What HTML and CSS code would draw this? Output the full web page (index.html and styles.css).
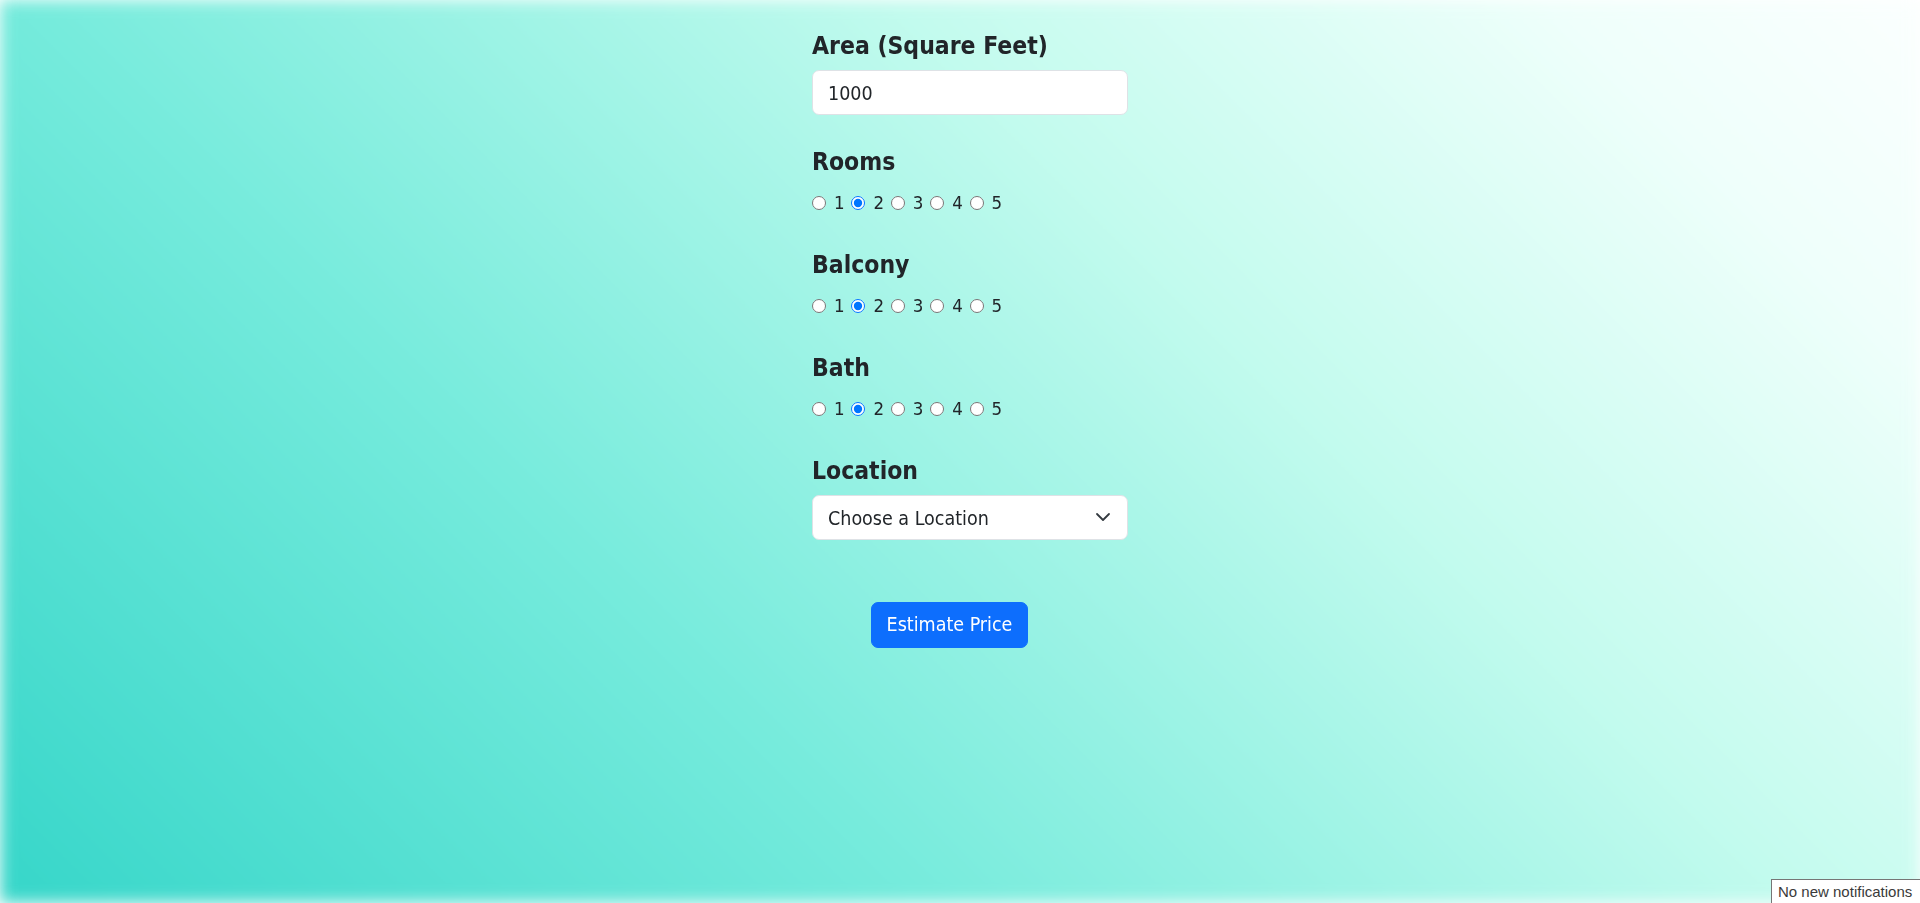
FILE: index.html
```html
<!DOCTYPE html>
<html lang="en">
<head>
<meta charset="utf-8">
<title>Price Estimator</title>
<link rel="stylesheet" href="styles.css">
</head>
<body>
<div class="bg"></div>
<main class="page">
  <form class="form">
    <div class="group">
      <label class="label" for="area">Area (Square Feet)</label>
      <input class="field" id="area" type="text" value="1000">
    </div>
    <div class="group">
      <div class="label">Rooms</div>
      <div class="radios">
        <label class="opt"><input type="radio" name="rooms"><span>1</span></label>
        <label class="opt"><input type="radio" name="rooms" checked><span>2</span></label>
        <label class="opt"><input type="radio" name="rooms"><span>3</span></label>
        <label class="opt"><input type="radio" name="rooms"><span>4</span></label>
        <label class="opt"><input type="radio" name="rooms"><span>5</span></label>
      </div>
    </div>
    <div class="group">
      <div class="label">Balcony</div>
      <div class="radios">
        <label class="opt"><input type="radio" name="balcony"><span>1</span></label>
        <label class="opt"><input type="radio" name="balcony" checked><span>2</span></label>
        <label class="opt"><input type="radio" name="balcony"><span>3</span></label>
        <label class="opt"><input type="radio" name="balcony"><span>4</span></label>
        <label class="opt"><input type="radio" name="balcony"><span>5</span></label>
      </div>
    </div>
    <div class="group">
      <div class="label">Bath</div>
      <div class="radios">
        <label class="opt"><input type="radio" name="bath"><span>1</span></label>
        <label class="opt"><input type="radio" name="bath" checked><span>2</span></label>
        <label class="opt"><input type="radio" name="bath"><span>3</span></label>
        <label class="opt"><input type="radio" name="bath"><span>4</span></label>
        <label class="opt"><input type="radio" name="bath"><span>5</span></label>
      </div>
    </div>
    <div class="group">
      <label class="label" for="loc">Location</label>
      <div class="select-wrap">
        <select class="field select" id="loc">
          <option>Choose a Location</option>
        </select>
        <svg class="chev" width="16" height="16" viewBox="0 0 16 16" aria-hidden="true"><path d="M2 5l6 6 6-6" fill="none" stroke="#343a40" stroke-width="1.8" stroke-linecap="round" stroke-linejoin="round"/></svg>
      </div>
    </div>
    <button class="btn" type="button">Estimate Price</button>
  </form>
</main>
<div class="toast">No new notifications</div>
</body>
</html>
```

FILE: styles.css
```css
html, body {
  margin: 0;
  padding: 0;
}

body {
  background: #ffffff;
  color: #212529;
  font-family: "DejaVu Sans Condensed", "DejaVu Sans", sans-serif;
  font-stretch: condensed;
  min-height: 100vh;
  overflow: hidden;
}

.bg {
  position: fixed;
  inset: 0;
  z-index: -1;
  background: linear-gradient(45deg, #36d6c9 0%, #76ebdc 33%, #c3fbee 64%, #effffb 87%, #fbfffe 100%);
  filter: blur(8px);
}

.page {
  padding-top: 31px;
}

.form {
  width: 316px;
  margin-left: calc(50% - 148px);
}

.group + .group {
  margin-top: 32px;
}

.label {
  display: block;
  font-weight: 700;
  font-size: 24.5px;
  line-height: 30px;
  margin-bottom: 9px;
  color: #212529;
}

.field {
  display: block;
  width: 100%;
  height: 45px;
  box-sizing: border-box;
  padding: 2px 15px 0;
  font-family: inherit;
  font-stretch: inherit;
  font-size: 19.5px;
  color: #212529;
  background: #ffffff;
  border: 1px solid #dee2e6;
  border-radius: 7px;
  outline: none;
}

.select {
  appearance: none;
  -webkit-appearance: none;
  padding-right: 40px;
}

.select-wrap {
  position: relative;
}

.chev {
  position: absolute;
  right: 17px;
  top: 14px;
  pointer-events: none;
}

.radios {
  display: flex;
  align-items: center;
  height: 30px;
  margin-top: 11px;
  font-size: 18.5px;
  color: #212529;
}

.opt {
  display: flex;
  align-items: center;
  margin-right: 6.8px;
}

.opt input {
  margin: 0;
  width: 14px;
  height: 14px;
}

.opt span {
  margin-left: 8px;
  line-height: 20px;
}

.btn {
  display: block;
  margin-top: 61.5px;
  margin-left: 59px;
  width: 157px;
  height: 46px;
  padding: 0;
  background: #0d6efd;
  color: #ffffff;
  border: 1px solid #0d6efd;
  border-radius: 7px;
  font-family: inherit;
  font-stretch: inherit;
  font-size: 19.5px;
}

.toast {
  position: fixed;
  right: 0;
  bottom: 0;
  width: 149px;
  height: 24px;
  box-sizing: border-box;
  padding: 3px 0 0 6px;
  background: #ffffff;
  border: 1px solid #767676;
  border-right: 0;
  border-bottom: 0;
  font-family: "Liberation Sans", Arial, sans-serif;
  font-stretch: normal;
  font-size: 15px;
  line-height: 17px;
  color: #3a3a3a;
  white-space: nowrap;
}
```
